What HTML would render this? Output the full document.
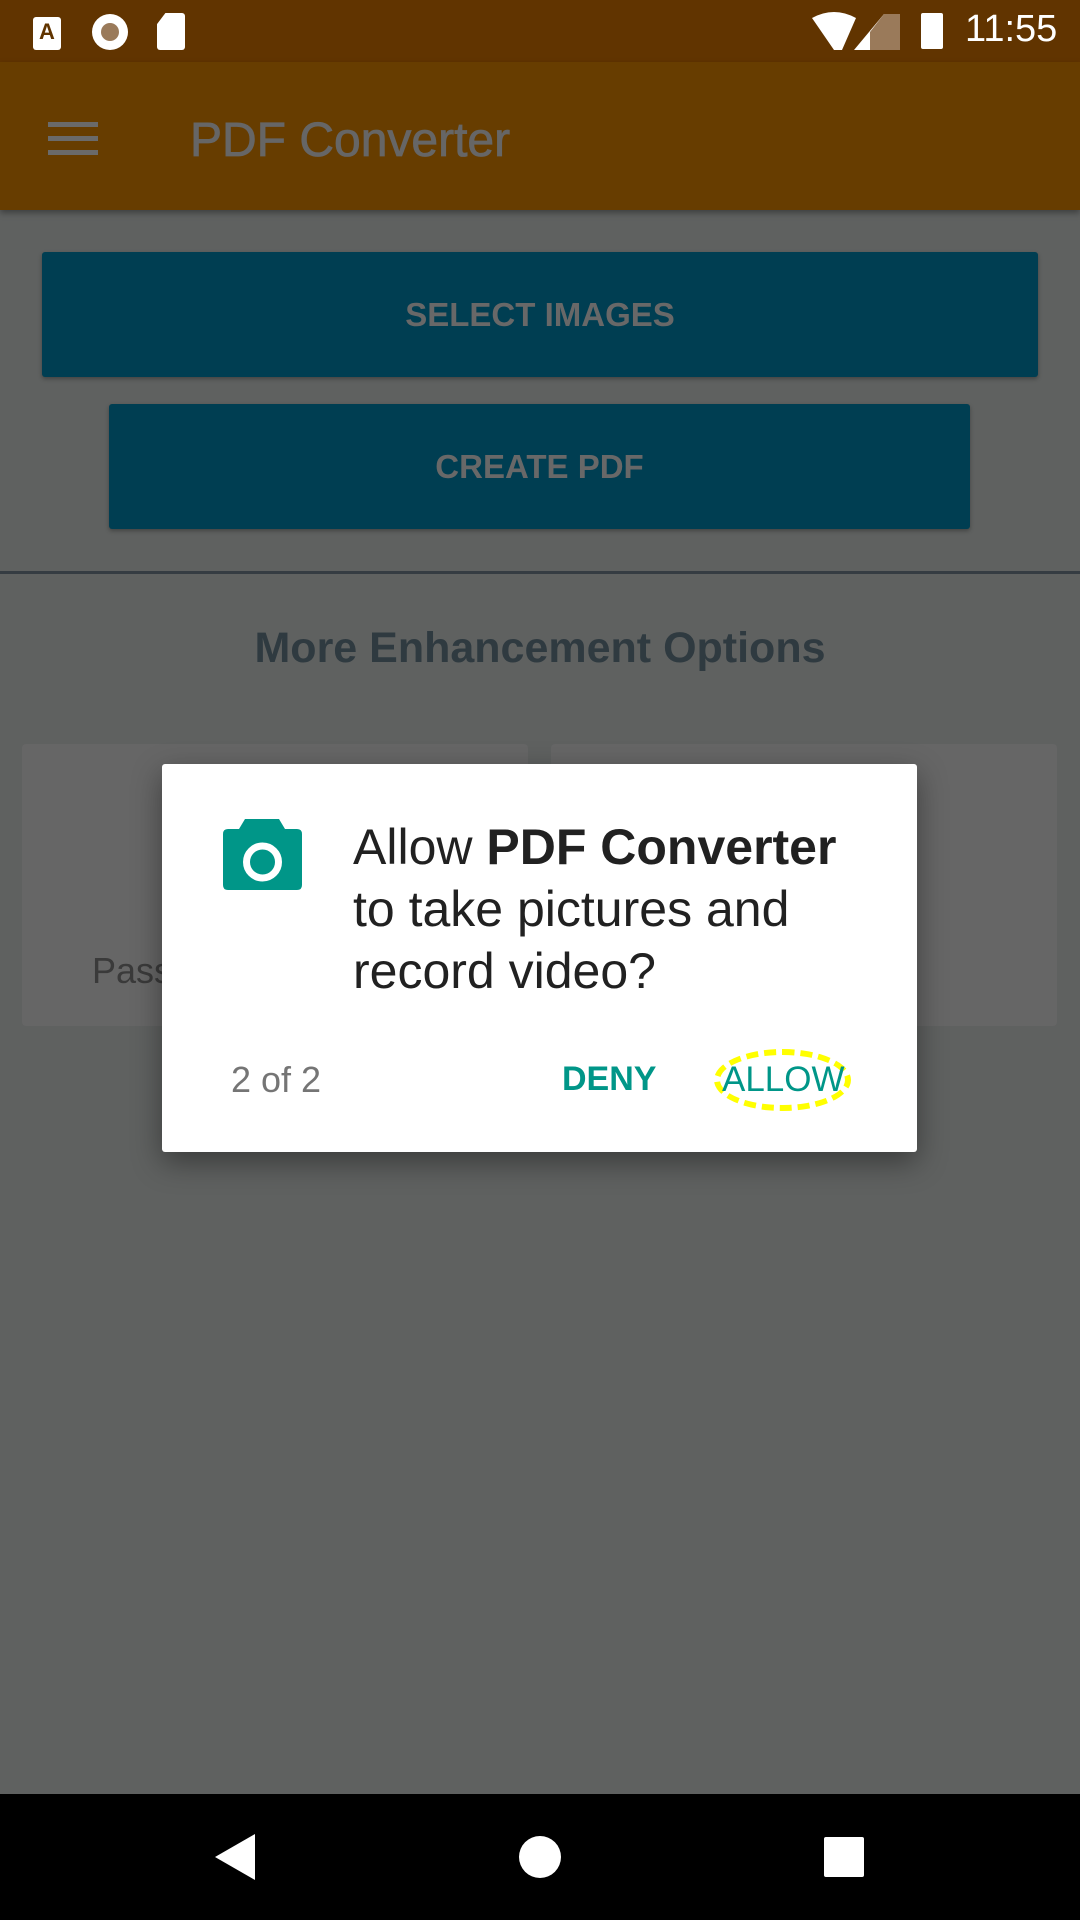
<!DOCTYPE html>
<html><head><meta charset="utf-8"><style>
*{margin:0;padding:0;box-sizing:border-box}
body{width:1080px;height:1920px;position:relative;overflow:hidden;background:#5f6160;font-family:"Liberation Sans",sans-serif}
.abs{position:absolute}
</style></head><body>
<div class="abs" style="left:0;top:0;width:1080px;height:62px;background:#613400"></div>
<div class="abs" style="left:33px;top:17px;width:28px;height:33px;background:#fff;border-radius:3px;color:#613400;font-weight:bold;font-size:22px;text-align:center;line-height:30px">A</div>
<div class="abs" style="left:92px;top:14px;width:36px;height:36px;border-radius:50%;background:#fff"></div>
<div class="abs" style="left:101px;top:23px;width:18px;height:18px;border-radius:50%;background:#9a7a5a"></div>
<div class="abs" style="left:157px;top:13px;width:28px;height:37px;background:#fff;border-radius:3px;clip-path:polygon(30% 0,100% 0,100% 100%,0 100%,0 30%)"></div>
<svg class="abs" style="left:812px;top:12px" width="100" height="40"><path d="M0 6 Q22 -6 44 6 L30 38 L22 38 Z" fill="#fff"/><path d="M42 38 L72 2 L72 38 Z" fill="#fff"/><path d="M58 20 L72 2 L88 2 L88 38 L58 38Z" fill="#9a7a5a"/></svg>
<div class="abs" style="left:921px;top:13px;width:22px;height:36px;background:#fff;border-radius:2px"></div>
<div class="abs" style="left:965px;top:8px;color:#fff;font-size:38px">11:55</div>
<div class="abs" style="left:0;top:62px;width:1080px;height:148px;background:#673d00;box-shadow:0 3px 6px rgba(0,0,0,.35)"></div>
<div class="abs" style="left:48px;top:122px;width:50px;height:5px;background:#6a6a6a;box-shadow:0 14px 0 #6a6a6a,0 28px 0 #6a6a6a"></div>
<div class="abs" style="left:190px;top:113px;color:#666;font-size:48px;-webkit-text-stroke:0.8px #666">PDF Converter</div>
<div class="abs" style="left:42px;top:252px;width:996px;height:125px;background:#003e52;border-radius:3px;box-shadow:0 2px 4px rgba(0,0,0,.3);color:#686868;font-size:33px;font-weight:bold;text-align:center;line-height:125px">SELECT IMAGES</div>
<div class="abs" style="left:109px;top:404px;width:861px;height:125px;background:#003e52;border-radius:3px;box-shadow:0 2px 4px rgba(0,0,0,.3);color:#686868;font-size:33px;font-weight:bold;text-align:center;line-height:125px">CREATE PDF</div>
<div class="abs" style="left:0;top:571px;width:1080px;height:3px;background:#353c42"></div>
<div class="abs" style="left:0;top:624px;width:1080px;text-align:center;color:#2f3a40;font-weight:bold;font-size:43px">More Enhancement Options</div>
<div class="abs" style="left:22px;top:744px;width:506px;height:282px;background:#666;border-radius:4px"></div>
<div class="abs" style="left:551px;top:744px;width:506px;height:282px;background:#666;border-radius:4px"></div>
<div class="abs" style="left:92px;top:950px;color:#3a3a3a;font-size:36px">Password</div>
<div class="abs" style="left:162px;top:764px;width:755px;height:388px;background:#fff;border-radius:3px;box-shadow:0 10px 30px rgba(0,0,0,.4)"></div>
<svg class="abs" style="left:223px;top:819px" width="80" height="72"><path d="M22 0 H56 L62 10 H74 Q79 10 79 15 V66 Q79 71 74 71 H5 Q0 71 0 66 V15 Q0 10 5 10 H16 Z" fill="#009688"/><circle cx="39.5" cy="43" r="16" fill="none" stroke="#fff" stroke-width="7"/></svg>
<div class="abs" style="left:353px;top:816px;color:#212121;font-size:50px;line-height:62px;width:560px">Allow <b>PDF Converter</b><br>to take pictures and<br>record video?</div>
<div class="abs" style="left:231px;top:1059px;color:#757575;font-size:36px">2 of 2</div>
<div class="abs" style="left:562px;top:1060px;color:#009688;font-size:34px;font-weight:bold">DENY</div>
<div class="abs" style="left:714px;top:1049px;width:137px;height:62px;border:6px dashed #ffff00;border-radius:50%"></div>
<div class="abs" style="left:722px;top:1060px;color:#009688;font-size:35px">ALLOW</div>
<div class="abs" style="left:0;top:1794px;width:1080px;height:126px;background:#000"></div>
<svg class="abs" style="left:215px;top:1834px" width="42" height="46"><path d="M40 0 V46 L0 23 Z" fill="#fff"/></svg>
<div class="abs" style="left:519px;top:1836px;width:42px;height:42px;border-radius:50%;background:#fff"></div>
<div class="abs" style="left:824px;top:1837px;width:40px;height:40px;background:#fff;border-radius:2px"></div>
</body></html>
